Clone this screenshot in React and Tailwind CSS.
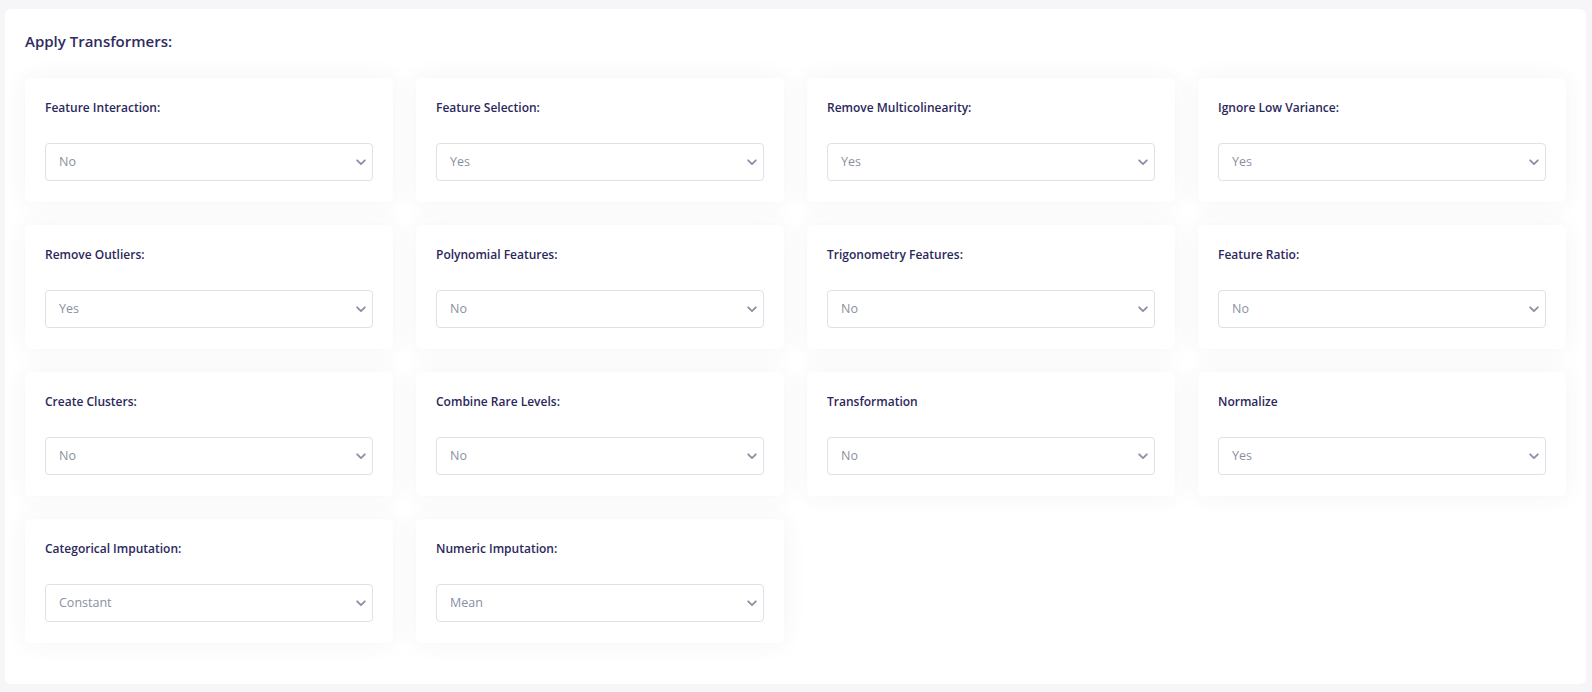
import React from "react";

const fields = [
  ["Feature Interaction:", "No"],
  ["Feature Selection:", "Yes"],
  ["Remove Multicolinearity:", "Yes"],
  ["Ignore Low Variance:", "Yes"],
  ["Remove Outliers:", "Yes"],
  ["Polynomial Features:", "No"],
  ["Trigonometry Features:", "No"],
  ["Feature Ratio:", "No"],
  ["Create Clusters:", "No"],
  ["Combine Rare Levels:", "No"],
  ["Transformation", "No"],
  ["Normalize", "Yes"],
  ["Categorical Imputation:", "Constant"],
  ["Numeric Imputation:", "Mean"],
];

function Chevron() {
  return (
    <svg width="10" height="7" viewBox="0 0 10 7" fill="none">
      <path d="M1.2 1.3L5 5.1L8.8 1.3" stroke="#8a8fa3" strokeWidth="1.8" strokeLinecap="round" strokeLinejoin="round" />
    </svg>
  );
}

export default function App() {
  return (
    <div className="min-h-[692px] bg-[#f6f6f9] pt-[9px] px-[5px] pb-[8px] font-['Open_Sans',sans-serif]">
      <div className="bg-white rounded-[6px] px-[20px] pt-[22px] pb-[41px] w-[1581px]">
        <h2 className="text-[15px] leading-[20px] font-semibold text-[#2f2b5e] mb-[27px]">Apply Transformers:</h2>
        <div className="grid grid-cols-4 gap-x-[23px] gap-y-[23px]">
          {fields.map(([label, value]) => (
            <div key={label} className="bg-white rounded-[6px] shadow-[0_0_24px_rgba(60,60,110,0.06)] h-[124px] px-[20px] pt-[21px]">
              <div className="text-[12px] leading-[18px] font-[560] text-[#2b285c]">{label}</div>
              <div className="mt-[26px] h-[38px] border border-[#dfe1e8] rounded-[4px] flex items-center justify-between pl-[13px] pr-[6px]">
                <span className="text-[12.5px] text-[#8a8fa3]">{value}</span>
                <Chevron />
              </div>
            </div>
          ))}
        </div>
      </div>
    </div>
  );
}
